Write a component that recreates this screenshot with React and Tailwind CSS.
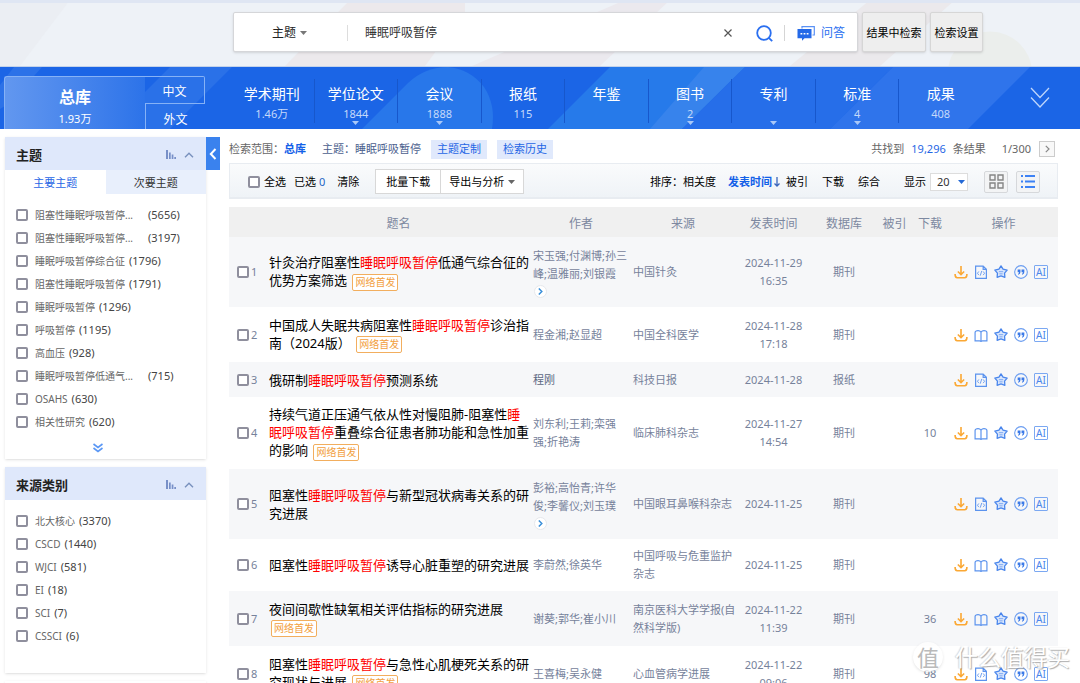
// Literature search results page: search bar, library tabs, facet sidebar
// and the result table.

import { Fragment } from "react";
import { clsx } from "clsx";

const libraries = [
  { name: "学术期刊", count: "1.46万" },
  { name: "学位论文", count: "1844", more: true },
  { name: "会议", count: "1888", more: true },
  { name: "报纸", count: "115" },
  { name: "年鉴", count: "" },
  { name: "图书", count: "2", more: true },
  { name: "专利", count: "", more: true },
  { name: "标准", count: "4", more: true },
  { name: "成果", count: "408" },
];

const topics = [
  { name: "阻塞性睡眠呼吸暂停...", count: 5656, cut: true },
  { name: "阻塞性睡眠呼吸暂停...", count: 3197, cut: true },
  { name: "睡眠呼吸暂停综合征", count: 1796 },
  { name: "阻塞性睡眠呼吸暂停", count: 1791 },
  { name: "睡眠呼吸暂停", count: 1296 },
  { name: "呼吸暂停", count: 1195 },
  { name: "高血压", count: 928 },
  { name: "睡眠呼吸暂停低通气...", count: 715, cut: true },
  { name: "OSAHS", count: 630 },
  { name: "相关性研究", count: 620 },
];

const sources = [
  { name: "北大核心", count: 3370 },
  { name: "CSCD", count: 1440 },
  { name: "WJCI", count: 581 },
  { name: "EI", count: 18 },
  { name: "SCI", count: 7 },
  { name: "CSSCI", count: 6 },
];

const KEYWORD = "睡眠呼吸暂停";

const rows = [
  {
    title: "针灸治疗阻塞性睡眠呼吸暂停低通气综合征的优势方案筛选",
    first: true,
    authors: "宋玉强;付渊博;孙三峰;温雅丽;刘银霞",
    moreAuthors: true,
    source: "中国针灸",
    date: "2024-11-29 16:35",
    db: "期刊",
    html: true,
    height: "h-[70px]",
  },
  {
    title: "中国成人失眠共病阻塞性睡眠呼吸暂停诊治指南（2024版）",
    first: true,
    authors: "程金湘;赵显超",
    source: "中国全科医学",
    date: "2024-11-28 17:18",
    db: "期刊",
    height: "h-[55px]",
  },
  {
    title: "俄研制睡眠呼吸暂停预测系统",
    authors: "程刚",
    source: "科技日报",
    date: "2024-11-28",
    db: "报纸",
    html: true,
    height: "h-[35px]",
  },
  {
    title: "持续气道正压通气依从性对慢阻肺-阻塞性睡眠呼吸暂停重叠综合征患者肺功能和急性加重的影响",
    first: true,
    authors: "刘东利;王莉;栾强强;折艳涛",
    source: "临床肺科杂志",
    date: "2024-11-27 14:54",
    db: "期刊",
    downloads: 10,
    height: "h-[72px]",
  },
  {
    title: "阻塞性睡眠呼吸暂停与新型冠状病毒关系的研究进展",
    authors: "彭裕;高怡青;许华俊;李馨仪;刘玉璞",
    moreAuthors: true,
    source: "中国眼耳鼻喉科杂志",
    date: "2024-11-25",
    db: "期刊",
    html: true,
    height: "h-[70px]",
  },
  {
    title: "阻塞性睡眠呼吸暂停诱导心脏重塑的研究进展",
    authors: "李蔚然;徐英华",
    source: "中国呼吸与危重监护杂志",
    date: "2024-11-25",
    db: "期刊",
    height: "h-[52px]",
  },
  {
    title: "夜间间歇性缺氧相关评估指标的研究进展",
    first: true,
    authors: "谢葵;郭华;崔小川",
    source: "南京医科大学学报(自然科学版)",
    date: "2024-11-22 11:39",
    db: "期刊",
    downloads: 36,
    height: "h-[55px]",
  },
  {
    title: "阻塞性睡眠呼吸暂停与急性心肌梗死关系的研究现状与进展",
    first: true,
    authors: "王喜梅;吴永健",
    source: "心血管病学进展",
    date: "2024-11-22 09:06",
    db: "期刊",
    downloads: 98,
    html: true,
    height: "h-[55px]",
  },
];

export default function App() {
  return (
    <div className="flex h-screen flex-col overflow-hidden bg-white font-['Noto_Sans','Noto_Sans_CJK_SC',sans-serif] text-[11px] leading-[18px] text-[#222]">
      <SearchHeader />
      <LibraryNav />
      <div className="flex items-start pt-2 pl-[5px]">
        <Sidebar />
        <button
          type="button"
          aria-label="收起侧栏"
          className="flex h-[33px] w-[14px] shrink-0 items-center justify-center bg-[#3a82ee]"
        >
          <svg className="h-3 w-2" viewBox="0 0 8 12" fill="none" stroke="#fff" strokeWidth="2">
            <path d="M6.5 1 L1.8 6 L6.5 11" />
          </svg>
        </button>
        <main className="mr-[22px] ml-[9px] min-w-0 flex-1">
          <ScopeBar />
          <Toolbar />
          <ResultTable />
        </main>
      </div>
      <Watermark />
    </div>
  );
}

function SearchHeader() {
  return (
    <header className="relative h-[67px] shrink-0 border-b border-[#c4d3ea] bg-[#eef2f7] pt-3">
      <svg
        className="absolute inset-0 h-full w-full"
        viewBox="0 0 1080 67"
        preserveAspectRatio="none"
        aria-hidden="true"
      >
        <path d="M0 0H70L20 67H0Z" fill="#ebeef3" />
        <path d="M350 0H465V12L425 67H285Z" fill="#ece9ec" />
        <path d="M625 0H670L600 67H472Z" fill="#ebe9ee" />
        <path d="M870 0H955L880 67H790Z" fill="#ebe9ec" />
        <circle cx="990" cy="74" r="42" fill="#ebeeec" />
        <path d="M0 0H1080V3H0Z" fill="#dfe6f3" />
      </svg>
      <form className="relative flex h-10 pr-[97px] pl-[233px]" onSubmit={(e) => e.preventDefault()}>
        <div className="flex min-w-0 flex-1 items-center rounded-[2px] border border-[#d5d6d9] bg-white pt-[2px] shadow-sm">
          <div className="relative flex w-[114px] items-center border-r border-[#ddd]">
            <select
              aria-label="检索字段"
              className="w-full appearance-none bg-transparent pl-[38px] text-xs text-[#222] outline-none"
            >
              <option>主题</option>
            </select>
            <Caret className="pointer-events-none absolute left-[66px] text-[#777]" />
          </div>
          <input
            aria-label="检索词"
            defaultValue={KEYWORD}
            className="min-w-0 flex-1 bg-transparent pl-[17px] text-xs text-[#333] outline-none"
          />
          <button type="button" aria-label="清空" className="mr-6">
            <svg className="size-2" viewBox="0 0 8 8" stroke="#555" strokeWidth="1.2">
              <path d="M0.5 0.5 L7.5 7.5 M7.5 0.5 L0.5 7.5" />
            </svg>
          </button>
          <button type="submit" aria-label="检索" className="mr-[11px]">
            <svg className="size-[17px]" viewBox="0 0 17 17" fill="none" stroke="#2a6ff0" strokeWidth="1.8">
              <circle cx="8" cy="8" r="6.8" />
              <path d="M12.8 12.8 L16.2 16.2" />
            </svg>
          </button>
          <button
            type="button"
            className="flex items-center gap-[6px] border-l border-[#d5d5d5] pr-3 pl-3 text-xs text-[#2a6ff0]"
          >
            <ChatIcon />
            问答
          </button>
        </div>
        <button
          type="button"
          className="ml-1 w-16 rounded-[2px] border border-[#d6d6d6] bg-[#eee] pt-[2px] text-[11px] whitespace-nowrap text-black shadow-sm"
        >
          结果中检索
        </button>
        <button
          type="button"
          className="ml-1 w-[53px] rounded-[2px] border border-[#d6d6d6] bg-[#eee] pt-[2px] text-[11px] whitespace-nowrap text-black shadow-sm"
        >
          检索设置
        </button>
      </form>
    </header>
  );
}

function LibraryNav() {
  return (
    <nav className="relative h-[62px] shrink-0 bg-[#1b65e6]">
      <svg
        className="absolute inset-0 h-full w-full"
        viewBox="0 0 1080 62"
        preserveAspectRatio="none"
        aria-hidden="true"
      >
        <path d="M14 0H42L10 36L0 42V18Z" fill="#2c72e8" />
        <path d="M170 0H232L170 62H108Z" fill="#2a71e8" />
        <path d="M362 62L408 16Q425 0 448 0Q470 2 484 20Q496 38 492 62Z" fill="#2877ea" />
        <path d="M610 0H745L682 62H548Z" fill="#267aea" />
        <path d="M704 0H745L682 62H650Z" fill="#3783ec" />
        <path d="M745 0H893L830 62H682Z" fill="#266ee9" />
        <path d="M893 0H1030L968 62H830Z" fill="#2f74eb" />
      </svg>
      <div className="relative flex h-full">
        <div className="flex w-[230px] shrink-0 pt-[9px] pl-1">
          <div className="flex w-[141px] flex-col items-center rounded-tl-[3px] border-t border-l border-[#86b2f6] bg-gradient-to-r from-[#6297ef] to-[#2c73e9] pt-[9px] text-white">
            <a href="#all" className="text-base leading-[23px] font-bold">
              总库
            </a>
            <span className="text-[11px] leading-5">1.93万</span>
          </div>
          <div className="flex w-[60px] flex-col text-center text-xs text-white">
            <a
              href="#zh"
              className="h-7 rounded-tr-[2px] border-t border-r border-b border-[#86b2f6] leading-[29px]"
            >
              中文
            </a>
            <a href="#en" className="h-[25px] border-l border-[#86b2f6] leading-[31px]">
              外文
            </a>
          </div>
        </div>
        <ul className="grid flex-1 grid-cols-9 pt-3">
          {libraries.map((lib, i) => (
            <li
              key={lib.name}
              className={clsx("h-[44px] text-center", i > 0 && "border-l border-[#1757cc]")}
            >
              <a href="#lib" className="flex flex-col items-center text-white">
                <span className="mt-[2px] text-sm leading-[26px]">{lib.name}</span>
                <span className="h-[14px] text-[11px] leading-[14px] text-[#c5d9fa]">{lib.count}</span>
                {lib.more && <Caret className="text-[#a9c8f8]" />}
              </a>
            </li>
          ))}
        </ul>
        <div className="flex w-[98px] items-center justify-center pl-[18px]">
          <button type="button" aria-label="展开更多文献类型">
            <svg className="h-[22px] w-5" viewBox="0 0 20 22" fill="none" stroke="#bfd6fb" strokeWidth="1.3">
              <path d="M1 1 L10 10.5 L19 1 M1 10.5 L10 20 L19 10.5" />
            </svg>
          </button>
        </div>
      </div>
    </nav>
  );
}

function Sidebar() {
  return (
    <aside className="flex w-[201px] shrink-0 flex-col gap-2">
      <section className="bg-white pb-1 shadow">
        <FacetHeader title="主题" />
        <div className="grid h-6 grid-cols-2">
          <button type="button" className="pt-[2px] text-[#1f66e5]">
            主要主题
          </button>
          <button type="button" className="bg-[#e8effc] pt-[2px] text-[#333]">
            次要主题
          </button>
        </div>
        <FacetList items={topics} className="pt-[9px]" />
        <button type="button" aria-label="展开" className="mx-auto flex h-[22px] items-end pr-4 pb-[2px]">
          <svg className="size-[10px]" viewBox="0 0 10 10" fill="none" stroke="#5a97f5" strokeWidth="1.6">
            <path d="M0.5 1 L5 4.5 L9.5 1 M0.5 5 L5 8.5 L9.5 5" />
          </svg>
        </button>
      </section>
      <section className="bg-white pb-[26px] shadow">
        <FacetHeader title="来源类别" />
        <FacetList items={sources} className="pt-[9px]" />
      </section>
      <section className="h-8 bg-white shadow" />
    </aside>
  );
}

function FacetHeader({ title }) {
  return (
    <div className="flex h-[33px] items-center bg-[#dfe8fb] pt-[2px] pr-3 pl-[11px]">
      <h2 className="flex-1 text-[13px] font-bold text-[#222]">{title}</h2>
      <button type="button" aria-label="可视化" className="mr-2">
        <svg className="h-[9px] w-[10px]" viewBox="0 0 10 9" fill="#7890c8">
          <path d="M0 0h2v9H0z M3 2.5h1.7V9H3z M5.7 4.5h1.7V9H5.7z M8.3 7h1.7v2H8.3z" />
        </svg>
      </button>
      <button type="button" aria-label="折叠">
        <svg className="h-[6px] w-[10px]" viewBox="0 0 10 6" fill="none" stroke="#7890bd" strokeWidth="1.4">
          <path d="M1 5.2 L5 1.2 L9 5.2" />
        </svg>
      </button>
    </div>
  );
}

function FacetList({ items, className }) {
  return (
    <ul className={className}>
      {items.map((item, i) => (
        <li key={i} className="h-[23px] pl-[11px]">
          <label className="flex h-full items-center text-[11px] text-[#444]">
            <Check />
            <span className={clsx("ml-[7px] text-[10px] text-[#666]", item.cut && "w-[113px]")}>
              {item.name}
            </span>
            <span className={clsx(!item.cut && "ml-1")}>({item.count})</span>
          </label>
        </li>
      ))}
    </ul>
  );
}

function ScopeBar() {
  return (
    <div className="flex h-[26px] items-center pb-[2px] whitespace-nowrap text-[#666]">
      <span>检索范围：</span>
      <a href="#all" className="font-bold text-[#1260e8]">
        总库
      </a>
      <span className="ml-4 text-[#4c5f8e]">主题：睡眠呼吸暂停</span>
      <button type="button" className="ml-[10px] h-[19px] bg-[#e0e9fc] px-[6px] text-[#1f66e5]">
        主题定制
      </button>
      <button type="button" className="ml-[10px] h-[19px] bg-[#e0e9fc] px-[6px] text-[#1f66e5]">
        检索历史
      </button>
      <span className="ml-auto">共找到</span>
      <span className="mx-[7px] text-[#1f66e5]">19,296</span>
      <span>条结果</span>
      <span className="ml-4">1/300</span>
      <button
        type="button"
        aria-label="下一页"
        className="mr-[3px] ml-2 flex size-4 items-center justify-center border border-[#ccc] bg-[#f8f8f8]"
      >
        <svg className="h-2 w-[5px]" viewBox="0 0 5 8" fill="none" stroke="#888" strokeWidth="1.2">
          <path d="M0.8 0.8 L4 4 L0.8 7.2" />
        </svg>
      </button>
    </div>
  );
}

function Toolbar() {
  return (
    <div className="flex h-9 items-center border border-b-2 border-[#e8ecf1] bg-gradient-to-b from-[#fafbfc] to-[#eff3f7] pt-[2px] pr-[17px] pl-[18px] whitespace-nowrap text-black">
      <label className="flex items-center gap-1">
        <Check />
        全选
      </label>
      <span className="ml-2">
        已选 <span className="text-[#1f66c5]">0</span>
      </span>
      <button type="button" className="ml-3">
        清除
      </button>
      <div className="ml-4 flex h-[25px] border border-[#d8d8d8] bg-white">
        <button type="button" className="border-r border-[#d8d8d8] px-[10px]">
          批量下载
        </button>
        <button type="button" className="flex items-center gap-1 px-2">
          导出与分析
          <Caret className="text-[#666]" />
        </button>
      </div>
      <span className="ml-auto">排序：</span>
      <button type="button">相关度</button>
      <button type="button" className="ml-3 flex items-center font-bold text-[#1260e8]">
        发表时间
        <svg className="ml-[2px] h-[10px] w-[6px]" viewBox="0 0 6 10" fill="none" stroke="#3a66bb" strokeWidth="1.3">
          <path d="M3 0V9 M0.5 6.5 L3 9 L5.5 6.5" />
        </svg>
      </button>
      <button type="button" className="ml-[6px]">
        被引
      </button>
      <button type="button" className="ml-[14px]">
        下载
      </button>
      <button type="button" className="ml-[14px]">
        综合
      </button>
      <label htmlFor="page-size" className="ml-6">
        显示
      </label>
      <span className="relative ml-1 flex items-center">
        <select
          id="page-size"
          className="h-[18px] w-[38px] appearance-none border border-[#ddd] bg-white pl-[6px] text-[11px] leading-4 text-[#333] outline-none"
        >
          <option>20</option>
        </select>
        <Caret className="pointer-events-none absolute right-[3px] text-[#2469d6]" />
      </span>
      <button
        type="button"
        aria-label="摘要视图"
        className="ml-4 flex h-[22px] w-6 items-center justify-center rounded-[2px] border border-[#d6d8db] bg-[#f3f4f5]"
      >
        <svg className="size-[15px]" viewBox="0 0 15 15" fill="none" stroke="#858585" strokeWidth="1.4">
          <path d="M1 1h5v5H1z M9 1h5v5H9z M1 9h5v5H1z M9 9h5v5H9z" />
        </svg>
      </button>
      <button
        type="button"
        aria-label="列表视图"
        className="ml-2 flex h-[22px] w-6 items-center justify-center rounded-[2px] border border-[#d6d8db] bg-[#f3f4f5]"
      >
        <svg className="h-[13px] w-[14px]" viewBox="0 0 14 13" fill="#3d82f5">
          <path d="M0 0h2v2H0z M4 0h10v2H4z M0 5.5h2v2H0z M4 5.5h10v2H4z M0 11h2v2H0z M4 11h10v2H4z" />
        </svg>
      </button>
    </div>
  );
}

function ResultTable() {
  return (
    <table className="mt-2 w-full table-fixed border-collapse text-[#76829b]">
      <colgroup>
        <col className="w-[35px]" />
        <col />
        <col className="w-[96px]" />
        <col className="w-[108px]" />
        <col className="w-[73px]" />
        <col className="w-[68px]" />
        <col className="w-[33px]" />
        <col className="w-[38px]" />
        <col className="w-[109px]" />
      </colgroup>
      <thead>
        <tr className="h-[30px] bg-[#f0f0f0] text-xs whitespace-nowrap text-[#7d88a0] [&>th]:pt-[3px] [&>th]:font-normal">
          <th aria-label="选择" />
          <th>题名</th>
          <th>作者</th>
          <th>来源</th>
          <th>发表时间</th>
          <th>数据库</th>
          <th>被引</th>
          <th>下载</th>
          <th>操作</th>
        </tr>
      </thead>
      <tbody>
        {rows.map((row, i) => (
          <ResultRow key={row.title} row={row} index={i + 1} />
        ))}
      </tbody>
    </table>
  );
}

function ResultRow({ row, index }) {
  return (
    <tr className={clsx(row.height, index % 2 === 1 && "bg-[#f6f7f9]")}>
      <td className="pl-2">
        <label className="flex items-center gap-[2px]">
          <Check />
          {index}
        </label>
      </td>
      <td className="pl-[5px] text-[13px] text-black">
        <a href="#paper">
          <Title text={row.title} />
        </a>
        {row.first && (
          <>
            {" "}
            <span className="ml-[2px] inline-block rounded-[2px] border border-[#f2ae5e] bg-white px-[2px] align-middle text-[10px] leading-[15px] whitespace-nowrap text-[#f2a040]">
              网络首发
            </span>
          </>
        )}
      </td>
      <td className={clsx(index === 3 && "text-[#5b6782]")}>
        {row.authors}
        {row.moreAuthors && (
          <button
            type="button"
            aria-label="更多作者"
            className="mt-[2px] ml-px flex size-[13px] items-center justify-center rounded-full border border-[#e6e8ec] bg-white"
          >
            <svg className="h-[7px] w-[5px]" viewBox="0 0 5 7" fill="none" stroke="#3b8fd9" strokeWidth="1.5">
              <path d="M0.8 0.5 L3.8 3.5 L0.8 6.5" />
            </svg>
          </button>
        )}
      </td>
      <td className="pl-1">{row.source}</td>
      <td className="px-1 text-center">
        {row.date.split(" ").map((part) => (
          <div key={part}>{part}</div>
        ))}
      </td>
      <td className="text-center">{row.db}</td>
      <td />
      <td className="text-center">{row.downloads}</td>
      <td className="pl-[5px]">
        <div className="flex items-center gap-[6px]">
          <button type="button" aria-label="下载">
            <DownloadIcon />
          </button>
          <button type="button" aria-label="阅读">
            {row.html ? <HtmlIcon /> : <BookIcon />}
          </button>
          <button type="button" aria-label="收藏">
            <StarIcon />
          </button>
          <button type="button" aria-label="引用">
            <QuoteIcon />
          </button>
          <button
            type="button"
            className="size-[14px] rounded-[1px] border border-[#7ba8f2] text-center text-[10px] leading-3 text-[#4a86ec]"
          >
            AI
          </button>
        </div>
      </td>
    </tr>
  );
}

// Title with every hit of the search term in red
function Title({ text }) {
  return text.split(KEYWORD).map((part, i) => (
    <Fragment key={i}>
      {i > 0 && <em className="text-[#f00] not-italic">{KEYWORD}</em>}
      {part}
    </Fragment>
  ));
}

function Check() {
  return (
    <input
      type="checkbox"
      aria-label="选择"
      className="size-3 shrink-0 appearance-none rounded-[2px] border-2 border-[#8f8f9d] bg-white checked:bg-[#2a6ff0]"
    />
  );
}

function Caret({ className }) {
  return (
    <svg className={clsx("h-1 w-[7px]", className)} viewBox="0 0 7 4" fill="currentColor" aria-hidden="true">
      <path d="M0 0H7L3.5 4Z" />
    </svg>
  );
}

function ChatIcon() {
  return (
    <svg className="h-[15px] w-[18px]" viewBox="0 0 18 15" aria-hidden="true">
      <path d="M5 2.5V0.7H17.3V9H15.5" fill="none" stroke="#5b92f5" strokeWidth="1.2" />
      <path d="M0.5 3H14.5V12.3H7.5L5 14.8V12.3H0.5Z" fill="#2469e8" />
      <path d="M3.5 7h1.8v1.6H3.5z M6.6 7h1.8v1.6H6.6z M9.7 7h1.8v1.6H9.7z" fill="#fff" />
    </svg>
  );
}

function DownloadIcon() {
  return (
    <svg className="size-[14px]" viewBox="0 0 13 13" fill="none" stroke="#fba834" strokeWidth="1.5">
      <path d="M6.5 1V8.8 M3.6 6L6.5 9L9.4 6 M1 8.3Q1 11.8 3 11.8H10Q12 11.8 12 8.3" />
    </svg>
  );
}

function HtmlIcon() {
  return (
    <svg className="size-[14px]" viewBox="0 0 13 13" fill="none" stroke="#5b93ee" strokeWidth="1.1">
      <path d="M1.5 1H8.5L11.5 4V12.4H1.5Z M8.5 1V4H11.5" />
      <path d="M4.5 6L3.2 7.7L4.5 9.4 M8.5 6L9.8 7.7L8.5 9.4 M7.2 5.5L5.8 9.9" strokeWidth="0.8" />
    </svg>
  );
}

function BookIcon() {
  return (
    <svg className="size-[14px]" viewBox="0 0 13 13" fill="none" stroke="#5b93ee" strokeWidth="1.1">
      <path d="M6.5 3.8Q5.5 2.5 3.8 2.5Q1 2.5 1 4.2V12H5Q6.2 12 6.5 12.6Q6.8 12 8 12H12V4.2Q12 2.5 9.2 2.5Q7.5 2.5 6.5 3.8V12" />
    </svg>
  );
}

function StarIcon() {
  return (
    <svg className="size-[14px]" viewBox="0 0 13 13" stroke="#4a86ec" strokeLinejoin="round">
      <path
        d="M6.5 0.8L8.4 3.8L12.2 4.7L9.8 7.5L10.1 11.4L6.5 10.2L2.9 11.4L3.2 7.5L0.8 4.7L4.6 3.8Z"
        fill="#d9e6fc"
        strokeWidth="1.2"
      />
      <path d="M4.5 6.2H8.5M5 8.2H8" strokeWidth="0.6" />
    </svg>
  );
}

function QuoteIcon() {
  return (
    <svg className="size-[14px]" viewBox="0 0 13 13">
      <circle cx="6.5" cy="6.5" r="5.9" fill="none" stroke="#6b9df0" />
      <path
        d="M3.4 4.2H6V6.4Q6 8.3 4 9L3.7 8.3Q4.7 7.7 4.7 6.7H3.4Z M7 4.2H9.6V6.4Q9.6 8.3 7.6 9L7.3 8.3Q8.3 7.7 8.3 6.7H7Z"
        fill="#3b7ae8"
      />
    </svg>
  );
}

function Watermark() {
  return (
    <div className="pointer-events-none absolute right-[10px] bottom-2 flex items-center gap-3 opacity-80">
      <span className="flex size-[30px] items-center justify-center rounded-full bg-white text-[22px] text-[#aaa] shadow">
        值
      </span>
      <span className="text-[23px] leading-9 text-white [text-shadow:1px_1px_1px_#999,-1px_0_1px_#ccc]">
        什么值得买
      </span>
    </div>
  );
}
